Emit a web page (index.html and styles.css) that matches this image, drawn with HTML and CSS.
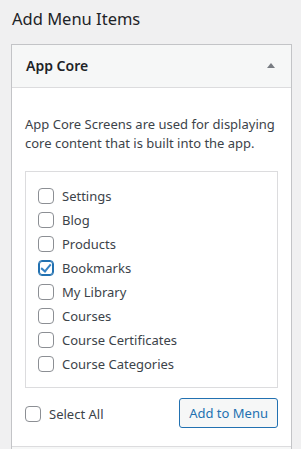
FILE: index.html
```html
<!DOCTYPE html>
<html lang="en">
<head>
  <meta charset="UTF-8">
  <meta name="viewport" content="width=device-width, initial-scale=1.0">
  <title>Add Menu Items</title>
  <link rel="stylesheet" href="styles.css">
</head>
<body>
  <h2 class="page-title">Add Menu Items</h2>
  <div class="accordion">
    <div class="section open">
      <div class="section-title">
        <span>App Core</span>
        <span class="toggle-arrow"></span>
      </div>
      <div class="section-content">
        <p class="section-desc">App Core Screens are used for displaying core content that is built into the app.</p>
        <ul class="item-list">
          <li><label><input type="checkbox"> Settings</label></li>
          <li><label><input type="checkbox"> Blog</label></li>
          <li><label><input type="checkbox"> Products</label></li>
          <li><label><input type="checkbox" checked> Bookmarks</label></li>
          <li><label><input type="checkbox"> My Library</label></li>
          <li><label><input type="checkbox"> Courses</label></li>
          <li><label><input type="checkbox"> Course Certificates</label></li>
          <li><label><input type="checkbox"> Course Categories</label></li>
        </ul>
        <div class="section-actions">
          <label class="select-all"><input type="checkbox"> Select All</label>
          <button class="btn-add" type="button">Add to Menu</button>
        </div>
      </div>
    </div>
    <div class="section">
      <div class="section-title"></div>
    </div>
  </div>
</body>
</html>
```

FILE: styles.css
```css
/* Base */
* {
  box-sizing: border-box;
}
body {
  margin: 0;
  padding: 0 9px 0 11px;
  background: #f0f0f1;
  color: #3c434a;
  font-family: 'Noto Sans', 'Open Sans', sans-serif;
  font-size: 13px;
  line-height: 1.4;
  overflow: hidden;
}
.page-title {
  margin: 0;
  padding: 7px 0 0 1px;
  height: 44px;
  font-size: 16.5px;
  font-weight: 400;
  color: #1d2327;
  line-height: 24px;
}

/* Accordion */
.accordion {
  background: #fff;
  border: 1px solid #c3c4c7;
}
.section-title {
  display: flex;
  align-items: center;
  justify-content: space-between;
  height: 43px;
  padding: 0 16px 0 14px;
  background: #f6f7f7;
  border-bottom: 1px solid #dcdcde;
  font-size: 14px;
  font-weight: 600;
  color: #1d2327;
}
.section + .section .section-title {
  border-top: 1px solid #dcdcde;
  border-bottom: none;
}
.toggle-arrow {
  width: 0;
  height: 0;
  border-left: 4px solid transparent;
  border-right: 4px solid transparent;
  border-bottom: 5px solid #787c82;
  margin-top: -2px;
}
.section-content {
  padding: 27px 13px 18px 13px;
}
.section-desc {
  margin: 0 0 18px;
  line-height: 19px;
}

/* Checkbox list */
.item-list {
  list-style: none;
  margin: 0;
  padding: 12px 12px 11px 12px;
  border: 1px solid #dcdcde;
}
.item-list li {
  height: 24px;
  display: flex;
  align-items: center;
}
label {
  display: flex;
  align-items: center;
  gap: 8px;
}
input[type="checkbox"] {
  appearance: none;
  -webkit-appearance: none;
  margin: 0;
  width: 16px;
  height: 16px;
  border: 1px solid #8c8f94;
  border-radius: 4px;
  background: #fff;
  position: relative;
}
input[type="checkbox"]:checked {
  border-color: #2271b1;
  box-shadow: inset 0 0 0 1px #2271b1;
}
input[type="checkbox"]:checked::after {
  content: '';
  position: absolute;
  left: 4px;
  top: 1px;
  width: 4px;
  height: 8px;
  border: solid #3582c4;
  border-width: 0 2px 2px 0;
  transform: rotate(40deg);
}

/* Footer actions */
.section-actions {
  display: flex;
  align-items: center;
  justify-content: space-between;
  margin-top: 10px;
}
.select-all {
  margin-top: 2px;
}
.btn-add {
  height: 30px;
  padding: 0 9px;
  font-family: inherit;
  font-size: 13px;
  color: #2271b1;
  background: #f6f7f7;
  border: 1px solid #2271b1;
  border-radius: 3px;
  cursor: pointer;
}
```
